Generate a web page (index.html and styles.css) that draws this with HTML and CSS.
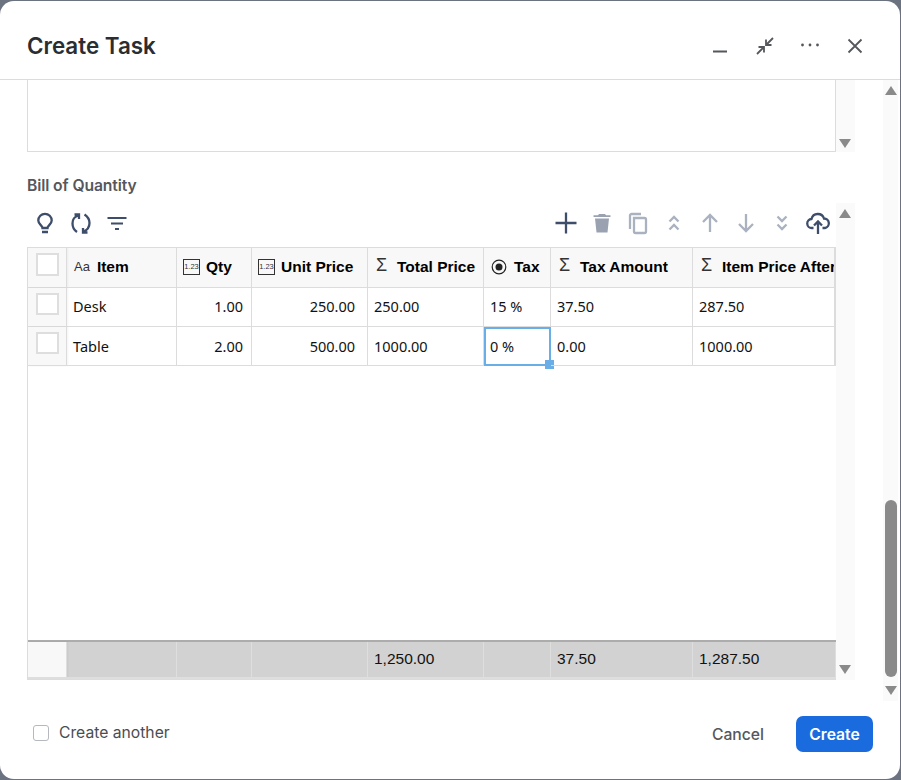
FILE: index.html
```html
<!DOCTYPE html>
<html lang="en">
<head>
<meta charset="utf-8">
<title>Create Task</title>
<link rel="stylesheet" href="styles.css">
</head>
<body>
<div class="modal">
  <header class="head">
    <h1 class="title">Create Task</h1>
    <div class="win-actions">
      <svg class="win-ico" viewBox="0 0 24 24"><path d="M5 17.500h14" /></svg>
      <svg class="win-ico" viewBox="0 0 24 24"><path d="M20 4l-7 7M13 5.500V11h5.500M4 20l7-7M5.500 13H11v5.500" /></svg>
      <svg class="win-ico" viewBox="0 0 24 24"><circle class="dot" cx="4.500" cy="11" r="1.400"/><circle class="dot" cx="12" cy="11" r="1.400"/><circle class="dot" cx="19.500" cy="11" r="1.400"/></svg>
      <svg class="win-ico" viewBox="0 0 24 24"><path d="M5.500 5.500l13 13M18.500 5.500l-13 13" /></svg>
    </div>
  </header>
  <div class="main">
    <div class="content">
      <div class="area-row">
        <div class="textbox"></div>
        <div class="minibar"><span></span><i class="arrow-down"></i></div>
      </div>
      <div class="label">Bill of Quantity</div>
      <div class="boq-row">
        <div class="boq">
          <div class="tools">
            <div class="tool-group">
              <svg class="tool dark" viewBox="0 0 24 24"><path d="M9 21h6M9.500 17c0-2.500-4.200-3.500-4.200-7.500a6.700 6.700 0 0 1 13.400 0c0 4-4.200 5-4.200 7.500z" /></svg>
              <svg class="tool dark" viewBox="0 0 24 24"><path d="M8 21C5 19 3.500 16 3.500 12.500 3.500 8.500 5.500 5.500 9.500 4.500M5.500 3.500h4.500v4.500M15.500 3.500c3 2 5 5 5 8.500 0 4-2.200 7-6 8.500M18.500 21.500H14V17" /></svg>
              <svg class="tool dark thin" viewBox="0 0 24 24"><path d="M2.500 7h19M6 12.500h12M10 18h4" /></svg>
            </div>
            <div class="tool-group">
              <svg class="tool dark" viewBox="0 0 24 24"><path d="M12 1.500v21M1.500 12h21" /></svg>
              <svg class="tool mute" viewBox="0 0 24 24"><path class="fill" d="M5 7.500h14l-1.500 14h-11zM9 3h6l1 1.200h4.500v1.800h-17V4.200H8z"/></svg>
              <svg class="tool mute" viewBox="0 0 24 24"><path d="M8 7h10.500a1.500 1.500 0 0 1 1.500 1.500v12a1.500 1.500 0 0 1-1.500 1.500H9.500A1.500 1.500 0 0 1 8 20.500zM4 18V4.500A1.500 1.500 0 0 1 5.500 3H15" /></svg>
              <svg class="tool mute" viewBox="0 0 24 24"><path d="M7.500 10.500L12 6l4.500 4.500M7.500 18.500L12 14l4.500 4.500" /></svg>
              <svg class="tool mute" viewBox="0 0 24 24"><path d="M12 21V4M5 11l7-7 7 7" /></svg>
              <svg class="tool mute" viewBox="0 0 24 24"><path d="M12 3v17M5 13l7 7 7-7" /></svg>
              <svg class="tool mute" viewBox="0 0 24 24"><path d="M7.500 5.500L12 10l4.500-4.500M7.500 13.500L12 18l4.500-4.500" /></svg>
              <svg class="tool dark" viewBox="0 0 24 24"><path d="M7.500 17H6A4.500 4.500 0 0 1 5.500 8 6.500 6.500 0 0 1 18 7.500 4.800 4.800 0 0 1 19 17h-2.500M12 23V11M8 14.500l4-4 4 4" /></svg>
            </div>
          </div>
          <div class="sheet">
            <div class="row head-row">
              <div class="cell gutter"><span class="box"></span></div>
              <div class="cell"><span class="t-ico aa">Aa</span><b>Item</b></div>
              <div class="cell"><span class="t-ico num">1.23</span><b>Qty</b></div>
              <div class="cell"><span class="t-ico num">1.23</span><b>Unit Price</b></div>
              <div class="cell"><span class="t-ico sig">Σ</span><b>Total Price</b></div>
              <div class="cell"><svg class="t-radio" viewBox="0 0 16 16"><circle cx="8" cy="8" r="6.800"/><circle class="dot" cx="8" cy="8" r="3.500"/></svg><b>Tax</b></div>
              <div class="cell"><span class="t-ico sig">Σ</span><b>Tax Amount</b></div>
              <div class="cell clip"><span class="t-ico sig">Σ</span><b>Item Price After</b></div>
            </div>
            <div class="row body-row">
              <div class="cell gutter"><span class="box"></span></div>
              <div class="cell">Desk</div>
              <div class="cell num-cell">1.00</div>
              <div class="cell num-cell wide-pad">250.00</div>
              <div class="cell">250.00</div>
              <div class="cell">15 %</div>
              <div class="cell">37.50</div>
              <div class="cell">287.50</div>
            </div>
            <div class="row body-row">
              <div class="cell gutter"><span class="box"></span></div>
              <div class="cell">Table</div>
              <div class="cell num-cell">2.00</div>
              <div class="cell num-cell wide-pad">500.00</div>
              <div class="cell">1000.00</div>
              <div class="cell selected">0 %<span class="handle"></span></div>
              <div class="cell">0.00</div>
              <div class="cell">1000.00</div>
            </div>
            <div class="spacer"></div>
            <div class="row foot-row">
              <div class="cell gutter"></div>
              <div class="cell"></div>
              <div class="cell"></div>
              <div class="cell"></div>
              <div class="cell">1,250.00</div>
              <div class="cell"></div>
              <div class="cell">37.50</div>
              <div class="cell">1,287.50</div>
            </div>
          </div>
        </div>
        <div class="minibar tall"><i class="arrow-up"></i><i class="arrow-down"></i></div>
      </div>
    </div>
    <div class="scrollbar">
      <i class="arrow-up"></i>
      <div class="track"><div class="thumb"></div></div>
      <i class="arrow-down"></i>
    </div>
  </div>
  <footer class="foot">
    <label class="another"><span class="check"></span>Create another</label>
    <div class="buttons">
      <button class="btn-cancel">Cancel</button>
      <button class="btn-create">Create</button>
    </div>
  </footer>
</div>
</body>
</html>
```

FILE: styles.css
```css
* { box-sizing: border-box; }
html, body { margin: 0; height: 100%; }
body { background: #6b7280; padding: 1px 1px 1px 0; font-family: Inter, "Liberation Sans", sans-serif; overflow: hidden; }
.modal { width: 900px; height: 778px; background: #fff; border-radius: 14px; display: flex; flex-direction: column; overflow: hidden; }

.head { height: 79px; flex: none; border-bottom: 1px solid #dcdcdc; display: flex; align-items: center; justify-content: space-between; padding: 12px 33px 0 27px; }
.title { margin: 0 0 2px; font-size: 22.400px; font-weight: 600; color: #2b2d31; }
.win-actions { display: flex; gap: 21px; }
.win-ico { width: 24px; height: 24px; display: block; }
.win-ico path { fill: none; stroke: #55575c; stroke-width: 1.800; }
.win-ico .dot { fill: #55575c; }

.main { height: 621px; flex: none; display: flex; padding-left: 27px; overflow: hidden; }
.content { width: 828px; flex: none; }
.area-row { display: flex; height: 72px; }
.textbox { width: 809px; flex: none; border: 1px solid #dcdcdc; border-top: 0; }
.minibar { width: 19px; flex: none; background: #fafafa; display: flex; flex-direction: column; align-items: center; justify-content: flex-end; padding: 0 2px 4px 0; }
.minibar span { flex: 1; }
.label { margin-top: 25px; height: 18px; font-size: 15.700px; line-height: 18px; font-weight: 600; color: #55575c; letter-spacing: -0.1px; }
.boq-row { display: flex; height: 477px; margin-top: 8px; }
.boq { width: 809px; flex: none; display: flex; flex-direction: column; }
.minibar.tall { justify-content: space-between; padding: 6px 2px 6px 0; }

.tools { height: 44px; flex: none; display: flex; justify-content: space-between; align-items: flex-start; padding: 8px 6px 0 6px; }
.tool-group { display: flex; gap: 12px; }
.tool { width: 24px; height: 24px; display: block; }
.tool path { fill: none; stroke-width: 2.300; }
.tool.thin path { stroke-width: 2; }
.tool.dark path { stroke: #3d4d6a; }
.tool.mute path { stroke: #aab2c0; }
.tool.mute .fill { fill: #9aa2b1; stroke: none; }

.sheet { height: 433px; flex: none; border: 1px solid #dcdcdc; border-right: 0; display: flex; flex-direction: column; overflow: hidden; }
.row { display: grid; grid-template-columns: 39px 110px 75px 116px 116px 67px 142px 143px; flex: none; }
.cell { border-right: 1px solid #dcdcdc; border-bottom: 1px solid #dcdcdc; display: flex; align-items: center; padding: 0 5px 2px 6px; position: relative; white-space: nowrap; overflow: hidden; }
.head-row .cell:last-child, .body-row .cell:last-child { border-right-width: 2px; }
.gutter { background: #f8f8f8; justify-content: center; align-items: flex-start; padding: 5px 0 0; box-shadow: 1px 0 2px rgba(0,0,0,.05); }
.box { width: 23px; height: 23px; background: #fff; border: 2px solid #dedede; display: block; }

.head-row { height: 40px; background: #f8f8f8; font-family: "Liberation Sans", sans-serif; font-size: 15.500px; color: #000; }
.head-row b { font-weight: 700; }
.t-ico { flex: none; color: #333; }
.aa { font-size: 13px; font-family: "Liberation Sans", sans-serif; margin: 0 7px 0 1px; }
.num { width: 17px; height: 16px; border: 1px solid #333; font-size: 7.500px; line-height: 14px; text-align: center; margin-right: 6px; font-family: "Liberation Sans", sans-serif; }
.sig { font-size: 18px; font-family: "Liberation Sans", sans-serif; font-weight: 400; margin: 0 7px 3px 2px; width: 14px; }
.t-radio { width: 16px; height: 16px; flex: none; margin: 0 7px 0 1px; }
.t-radio circle { fill: none; stroke: #222; stroke-width: 1.200; }
.t-radio .dot { fill: #222; stroke: none; }
.clip { padding-right: 0; }

.body-row { font-family: "Noto Sans", "Open Sans", sans-serif; font-size: 14.500px; color: #111; }
.body-row:nth-child(2) { height: 39px; }
.body-row:nth-child(3) { height: 39px; }
.body-row:nth-child(3) .cell:not(.gutter) { padding-bottom: 1px; }
.cell.num-cell { justify-content: flex-end; padding-right: 8px; }
.cell.wide-pad { padding-right: 12px; }
.body-row .box { height: 22px; width: 23px; }
.cell.selected { overflow: visible; border: 2px solid #6aaee8; padding: 0 4px 2px 4px; }
.handle { position: absolute; right: -5px; bottom: -5px; width: 9px; height: 9px; background: #6aaee8; }
.spacer { flex: 1; }

.foot-row { height: 39px; background: #d2d2d2; border-top: 2px solid #acacac; font-family: "Liberation Sans", sans-serif; font-size: 15.500px; color: #111; }
.foot-row .cell { border-right-color: #dedede; border-bottom: 2px solid #dedede; }
.foot-row .gutter { background: #f8f8f8; }

.scrollbar { width: 15px; margin-left: 28px; flex: none; background: #fafafa; display: flex; flex-direction: column; align-items: center; padding: 6px 0; }
.track { flex: 1; width: 100%; display: flex; flex-direction: column; justify-content: flex-end; padding: 0 1px 9px 2px; }
.thumb { height: 177px; border-radius: 6px; background: #8a8a8a; }
.arrow-up { display: block; width: 0; height: 0; border-left: 6.500px solid transparent; border-right: 6.500px solid transparent; border-bottom: 9px solid #8a8a8a; }
.arrow-down { display: block; width: 0; height: 0; border-left: 6.500px solid transparent; border-right: 6.500px solid transparent; border-top: 9px solid #8a8a8a; }

.foot { flex: 1; display: flex; align-items: center; justify-content: space-between; padding: 0 27px 12px 33px; }
.another { display: flex; align-items: center; gap: 10px; font-size: 15.700px; color: #4a4c52; margin-top: -3px; }
.check { width: 16px; height: 16px; border: 1.500px solid #b5b8bf; border-radius: 3px; background: #fff; }
.buttons { display: flex; align-items: center; gap: 16px; }
.btn-cancel, .btn-create { font-family: inherit; font-size: 15.700px; border: 0; height: 36px; border-radius: 7px; }
.btn-cancel { width: 84px; background: transparent; color: #55575c; font-weight: 500; }
.btn-create { width: 77px; background: #1a6bdd; color: #fff; font-weight: 600; }
```
